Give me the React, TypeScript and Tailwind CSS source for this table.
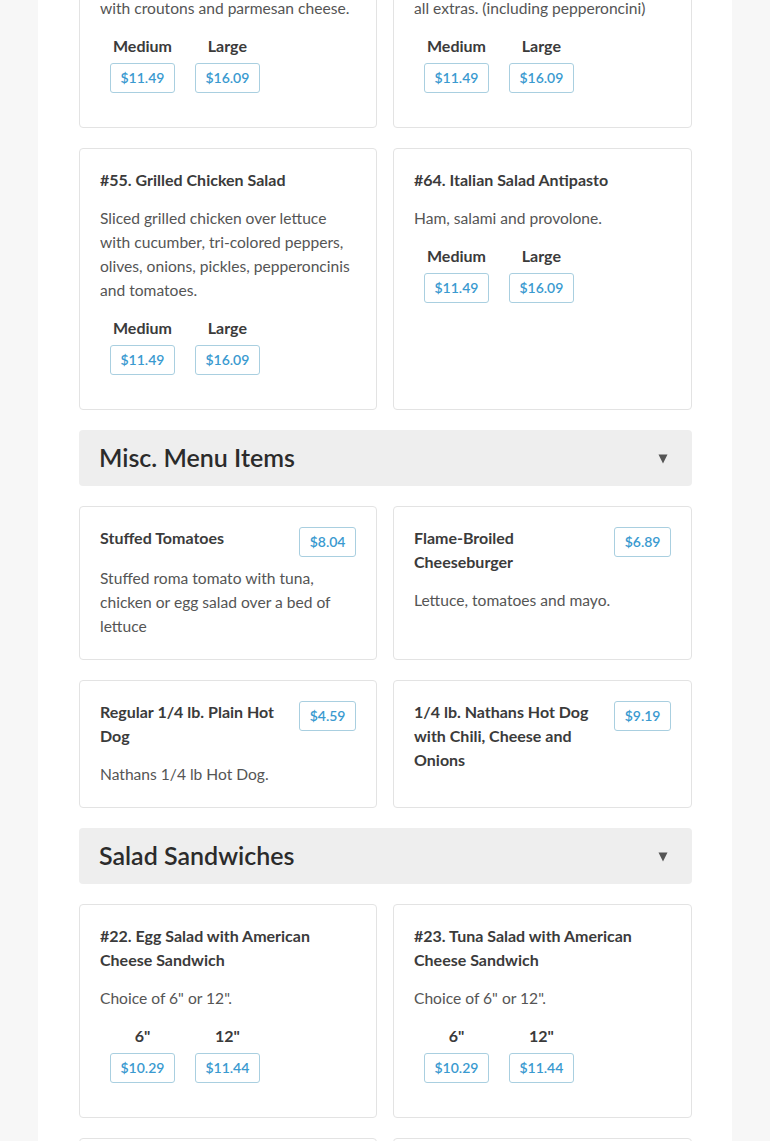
import React from "react";

type Price = { label: string; price: string };
type Item = { title: React.ReactNode; desc?: React.ReactNode; prices?: Price[]; price?: string };

function Chip({ price }: { price: string }) {
  return (
    <div className="h-[30px] px-[9.5px] flex items-center justify-center border border-[#a9cfe0] rounded-[3px] text-[14px] font-semibold text-[#3a9ad0] leading-none whitespace-nowrap bg-white">
      {price}
    </div>
  );
}

function SizedCard({ item }: { item: Item }) {
  return (
    <div className="bg-white border border-[#e3e3e3] rounded-[4px] pt-[19px] px-5 pb-5">
      <div className="text-[16px] leading-[24px] font-bold text-[#3b3b3b]">{item.title}</div>
      {item.desc && <div className="mt-[14px] text-[15.6px] leading-[24px] text-[#555]">{item.desc}</div>}
      <div className="mt-[14px] mb-[14px] flex gap-5 px-[10px]">
        {item.prices!.map((p) => (
          <div key={p.label} className="flex flex-col items-center">
            <div className="text-[16px] leading-[24px] font-bold text-[#3b3b3b]">{p.label}</div>
            <div className="mt-[5px]">
              <Chip price={p.price} />
            </div>
          </div>
        ))}
      </div>
    </div>
  );
}

function SingleCard({ item }: { item: Item }) {
  return (
    <div className="bg-white border border-[#e3e3e3] rounded-[4px] pt-[19px] px-5 pb-[21px]">
      <div className="flex items-start justify-between gap-4">
        <div className="mb-[14px] text-[16px] leading-[24px] font-bold text-[#3b3b3b]">{item.title}</div>
        <div className="mt-[1px] mb-[9px] shrink-0">
          <Chip price={item.price!} />
        </div>
      </div>
      {item.desc && <div className="text-[15.6px] leading-[24px] text-[#555]">{item.desc}</div>}
    </div>
  );
}

function Header({ title }: { title: string }) {
  return (
    <div className="h-[56px] bg-[#eeeeee] rounded-[4px] flex items-center justify-between pl-5 pr-[24px]">
      <div className="text-[25px] font-semibold text-[#2b2b2b]">{title}</div>
      <svg width="10" height="11" viewBox="0 0 10 11">
        <polygon points="0.5,1.5 9.5,1.5 5,10.5" fill="#555" />
      </svg>
    </div>
  );
}

function Row({ children }: { children: React.ReactNode }) {
  return <div className="grid grid-cols-[298px_1fr] gap-4">{children}</div>;
}

const salad = [{ label: "Medium", price: "$11.49" }, { label: "Large", price: "$16.09" }];
const sand = [{ label: '6"', price: "$10.29" }, { label: '12"', price: "$11.44" }];

export default function App() {
  return (
    <div className="min-h-screen bg-[#f7f7f7] overflow-hidden" style={{ fontFamily: "Lato, 'Liberation Sans', sans-serif" }}>
      <div className="mx-[38px] bg-white pl-[41px] pr-[40px] pb-10">
        <div className="-mt-[86px] flex flex-col gap-5">
          <Row>
            <SizedCard item={{ title: "#51. Caesar Salad", desc: <>Crisp romaine lettuce<br />with croutons and parmesan cheese.</>, prices: salad }} />
            <SizedCard item={{ title: "#52. Chef Salad", desc: <>Ham, turkey, cheese and egg, with<br />all extras. (including pepperoncini)</>, prices: salad }} />
          </Row>
          <Row>
            <SizedCard item={{ title: "#55. Grilled Chicken Salad", desc: "Sliced grilled chicken over lettuce with cucumber, tri-colored peppers, olives, onions, pickles, pepperoncinis and tomatoes.", prices: salad }} />
            <SizedCard item={{ title: "#64. Italian Salad Antipasto", desc: "Ham, salami and provolone.", prices: salad }} />
          </Row>
          <Header title="Misc. Menu Items" />
          <Row>
            <SingleCard item={{ title: "Stuffed Tomatoes", desc: "Stuffed roma tomato with tuna, chicken or egg salad over a bed of lettuce", price: "$8.04" }} />
            <SingleCard item={{ title: "Flame-Broiled Cheeseburger", desc: "Lettuce, tomatoes and mayo.", price: "$6.89" }} />
          </Row>
          <Row>
            <SingleCard item={{ title: "Regular 1/4 lb. Plain Hot Dog", desc: "Nathans 1/4 lb Hot Dog.", price: "$4.59" }} />
            <SingleCard item={{ title: "1/4 lb. Nathans Hot Dog with Chili, Cheese and Onions", price: "$9.19" }} />
          </Row>
          <Header title="Salad Sandwiches" />
          <Row>
            <SizedCard item={{ title: "#22. Egg Salad with American Cheese Sandwich", desc: 'Choice of 6" or 12".', prices: sand }} />
            <SizedCard item={{ title: "#23. Tuna Salad with American Cheese Sandwich", desc: 'Choice of 6" or 12".', prices: sand }} />
          </Row>
          <Row>
            <SizedCard item={{ title: "#24. Chicken Salad with American Cheese Sandwich", desc: 'Choice of 6" or 12".', prices: sand }} />
            <SizedCard item={{ title: "#25. Seafood Salad with American Cheese Sandwich", desc: 'Choice of 6" or 12".', prices: sand }} />
          </Row>
        </div>
      </div>
    </div>
  );
}
